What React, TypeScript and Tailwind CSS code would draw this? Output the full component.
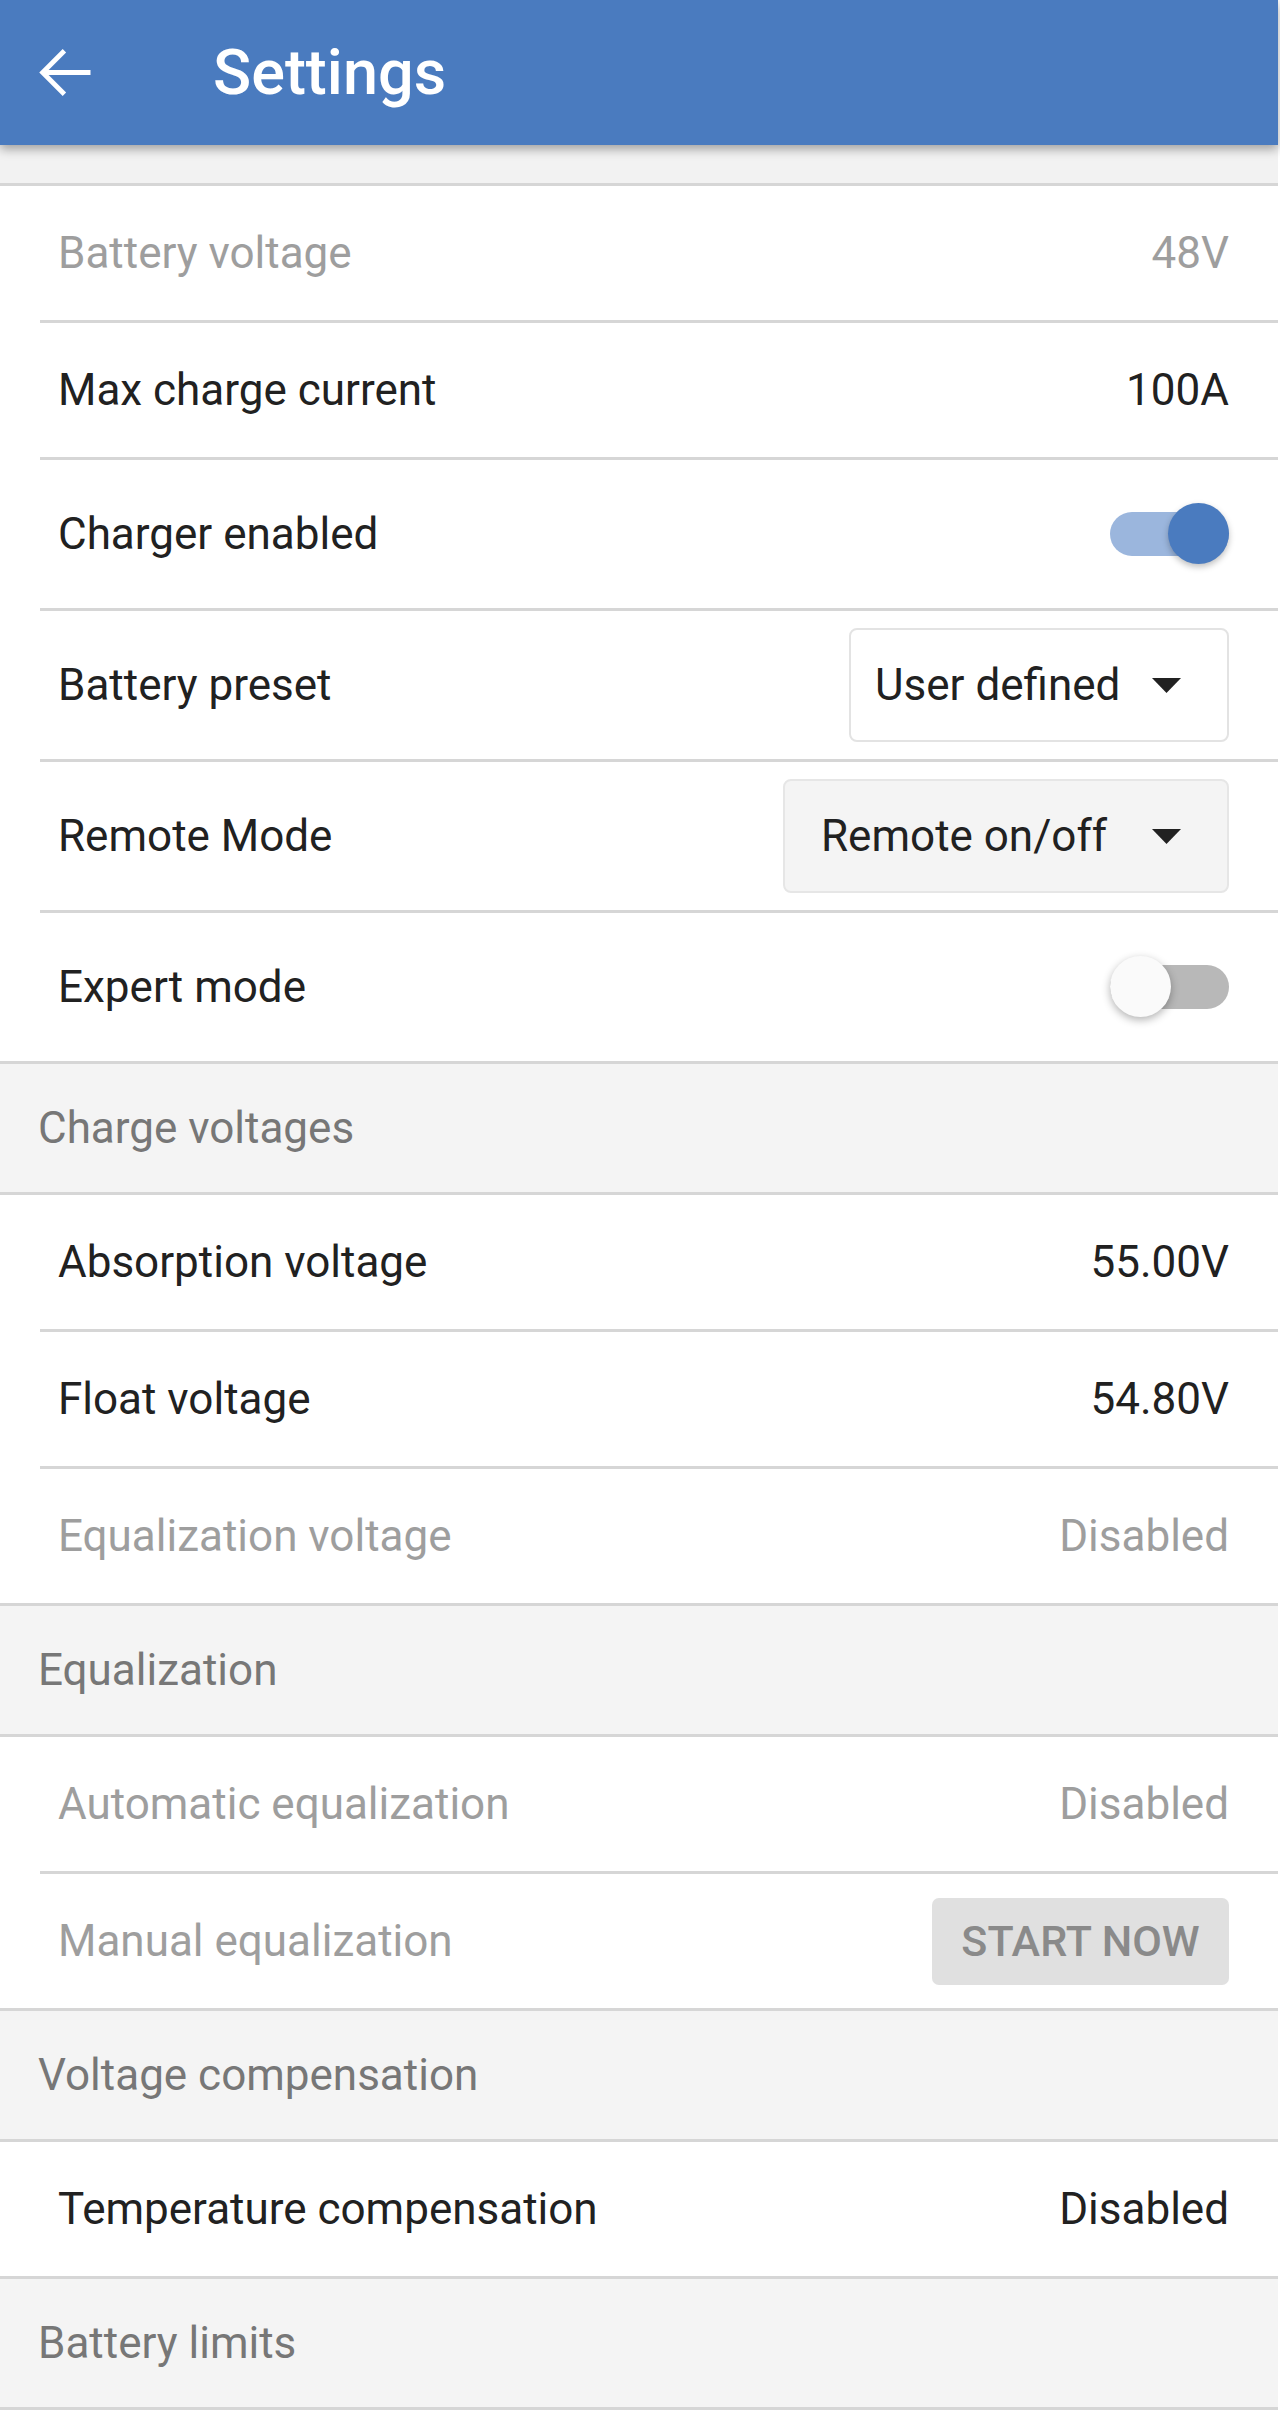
import clsx from "clsx";

type Row =
  | { kind: "header"; label: string }
  | { kind: "value"; label: string; value: string; dim?: boolean }
  | { kind: "toggle"; label: string; on: boolean }
  | { kind: "select"; label: string; value: string; filled?: boolean }
  | { kind: "button"; label: string; action: string };

const ROWS: Row[] = [
  { kind: "value", label: "Battery voltage", value: "48V", dim: true },
  { kind: "value", label: "Max charge current", value: "100A" },
  { kind: "toggle", label: "Charger enabled", on: true },
  { kind: "select", label: "Battery preset", value: "User defined" },
  { kind: "select", label: "Remote Mode", value: "Remote on/off", filled: true },
  { kind: "toggle", label: "Expert mode", on: false },
  { kind: "header", label: "Charge voltages" },
  { kind: "value", label: "Absorption voltage", value: "55.00V" },
  { kind: "value", label: "Float voltage", value: "54.80V" },
  { kind: "value", label: "Equalization voltage", value: "Disabled", dim: true },
  { kind: "header", label: "Equalization" },
  { kind: "value", label: "Automatic equalization", value: "Disabled", dim: true },
  { kind: "button", label: "Manual equalization", action: "START NOW" },
  { kind: "header", label: "Voltage compensation" },
  { kind: "value", label: "Temperature compensation", value: "Disabled" },
  { kind: "header", label: "Battery limits" },
];

function Caret() {
  return (
    <svg width="29" height="15" viewBox="0 0 29 15" className="shrink-0">
      <polygon points="0,0 29,0 14.5,15" fill="#212121" />
    </svg>
  );
}

function Toggle({ on }: { on: boolean }) {
  return (
    <div className="relative flex h-[62px] w-[119px] items-center">
      <div className={clsx("h-[44px] w-full rounded-full", on ? "bg-[#9bb6dd]" : "bg-[#b8b8b8]")} />
      <div
        className={clsx(
          "absolute top-0 size-[61px] rounded-full",
          on
            ? "right-0 bg-[#4a7bbf] shadow-[0_3px_6px_rgba(0,0,0,0.25)]"
            : "left-0 bg-[#fafafa] shadow-[0_3px_8px_rgba(0,0,0,0.3)]"
        )}
      />
    </div>
  );
}

function Control({ row }: { row: Row }) {
  if (row.kind === "value") {
    return <span className={row.dim ? "text-[#9e9e9e]" : "text-[#212121]"}>{row.value}</span>;
  }
  if (row.kind === "toggle") return <Toggle on={row.on} />;
  if (row.kind === "select") {
    return (
      <div
        className={clsx(
          "flex h-[114px] items-center rounded-[8px] border-2 pr-[46px] text-[#212121]",
          row.filled ? "w-[446px] border-[#e6e6e6] bg-[#f4f4f4] pl-[36px]" : "w-[380px] border-[#e3e3e3] bg-white pl-[24px]"
        )}
      >
        <span className="flex-1">{row.value}</span>
        <Caret />
      </div>
    );
  }
  if (row.kind === "button") {
    return (
      <div className="flex h-[87px] w-[297px] items-center justify-center rounded-[7px] bg-[#e0e0e0] text-[43px] font-medium text-[#8a8a8a]">
        {row.action}
      </div>
    );
  }
  return null;
}

export default function App() {
  return (
    <div className="min-h-[2420px] w-[1278px] bg-white font-['Roboto',sans-serif] text-[44px] leading-none">
      <header className="relative z-10 flex h-[145px] items-center bg-[#4a7bbf] pl-[28px] text-white shadow-[0_4px_10px_rgba(0,0,0,0.35)]">
        <svg width="75" height="75" viewBox="0 0 24 24" fill="white">
          <path d="M20 11.2H6.6l5.6-5.6L11.1 4.5 3.6 12l7.5 7.5 1.1-1.1-5.6-5.6H20v-1.6z" />
        </svg>
        <h1 className="ml-[110px] text-[63px] font-medium">Settings</h1>
      </header>
      <div className="h-[41px] border-b-[3px] border-[#d6d6d6] bg-[#f2f2f2]" />

      {ROWS.map((row, i) => {
        const next = ROWS[i + 1];
        if (row.kind === "header") {
          return (
            <div
              key={row.label}
              className="flex h-[131px] items-center border-b-[3px] border-[#d6d6d6] bg-[#f4f4f4] pl-[38px] text-[#777777]"
            >
              {row.label}
            </div>
          );
        }
        const inset = next !== undefined && next.kind !== "header";
        const tall = row.kind === "toggle" || row.kind === "select";
        const labelColor =
          (row.kind === "value" && row.dim) || row.kind === "button" ? "text-[#9e9e9e]" : "text-[#212121]";
        return (
          <div key={row.label} className={clsx("bg-white", inset && "pl-[40px]")}>
            <div
              className={clsx(
                "flex items-center justify-between border-b-[3px] border-[#d6d6d6] pr-[49px]",
                inset ? "pl-[18px]" : "pl-[58px]",
                tall ? "h-[151px]" : "h-[137px]"
              )}
            >
              <span className={labelColor}>{row.label}</span>
              <Control row={row} />
            </div>
          </div>
        );
      })}
    </div>
  );
}
